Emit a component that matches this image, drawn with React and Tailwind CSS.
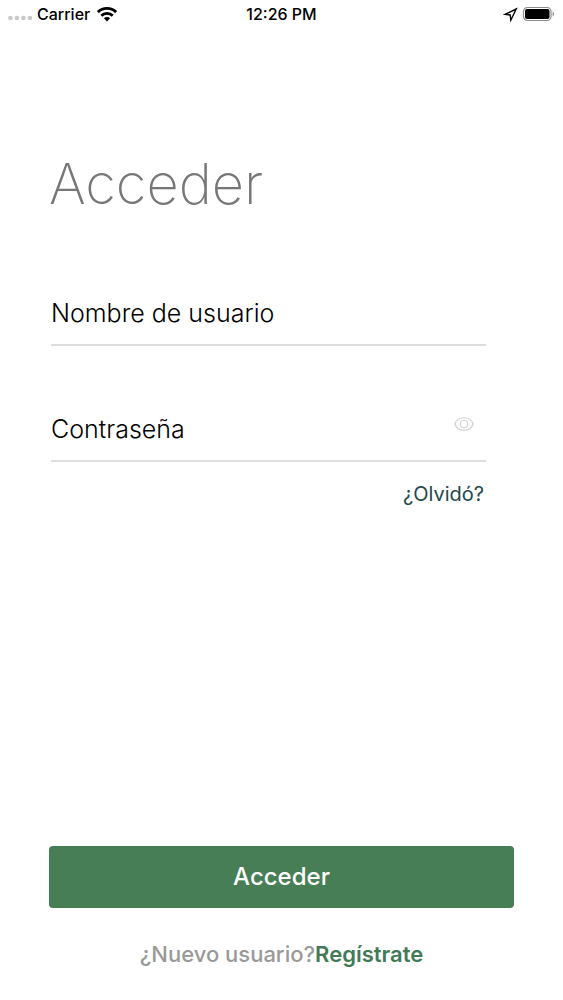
import { useState } from 'react';

const StatusBar = () => (
  <header className="grid grid-cols-3 items-center h-7 px-2 text-base text-black">
    <div className="flex items-center gap-1">
      <svg width="25" height="8" viewBox="0 0 25 8" className="mt-2" aria-hidden="true">
        <g fill="#c9c9c9">
          <circle cx="2.4" cy="4" r="2.3" />
          <circle cx="8.9" cy="4" r="2.3" />
          <circle cx="15.4" cy="4" r="2.3" />
          <circle cx="21.9" cy="4" r="2.3" />
        </g>
      </svg>
      <span className="font-medium">Carrier</span>
      <svg width="22" height="16" viewBox="0 0 22 16" className="ml-0.5" aria-hidden="true">
        <g fill="none" stroke="#000" strokeWidth="2.9">
          <path d="M1.9 6.1a13 13 0 0 1 18.2 0" />
          <path d="M5.3 9.7a8.1 8.1 0 0 1 11.4 0" />
        </g>
        <path d="M11 15.4l-3.1-3.2a4.4 4.4 0 0 1 6.2 0z" fill="#000" />
      </svg>
    </div>

    <span className="text-center whitespace-nowrap font-medium">12:26 PM</span>

    <div className="flex items-center justify-end gap-1">
      <svg width="15" height="15" viewBox="0 0 15 15" aria-hidden="true">
        <path d="M13.2 2L2 7.4l5.2.6.6 5.2z" fill="none" stroke="#000" strokeWidth="1.4" />
      </svg>
      <svg width="33" height="16" viewBox="0 0 33 16" aria-hidden="true">
        <rect x="1.5" y="1.5" width="27.5" height="13" rx="4" fill="none" stroke="#8c8c8c" strokeWidth="1.2" />
        <rect x="3" y="3" width="24.5" height="10" rx="2" fill="#000" />
        <path d="M30.6 5.5c1.9.7 1.9 4.3 0 5z" fill="#8c8c8c" />
      </svg>
    </div>
  </header>
);

const EyeIcon = () => (
  <svg width="20" height="16" viewBox="0 0 20 16" fill="none" stroke="#d0ccd0" strokeWidth="1.1" aria-hidden="true">
    <path d="M.7 8C2.4 3.8 6 1.7 10 1.7S17.6 3.8 19.3 8C17.6 12.2 14 14.3 10 14.3S2.4 12.2.7 8z" />
    <circle cx="10" cy="8" r="3.7" />
  </svg>
);

const App = () => {
  const [formData, setFormData] = useState({ username: '', password: '' });
  const [showPassword, setShowPassword] = useState(false);

  const handleInputChange = (e) => {
    setFormData({ ...formData, [e.target.name]: e.target.value });
  };

  const handleSubmit = (e) => {
    e.preventDefault();
  };

  return (
    <div className="flex flex-col min-h-screen bg-white font-['Inter',sans-serif]">
      <StatusBar />

      <form onSubmit={handleSubmit} className="flex flex-col flex-1 px-[49px] pb-8">
        <h1 className="mt-30 text-[56px] leading-[72px] font-extralight text-[#777777]">Acceder</h1>

        <div className="mt-15 ml-0.5 mr-7">
          <div className="border-b-2 border-[#dedede]">
            <input type="text" name="username" aria-label="Nombre de usuario" placeholder="Nombre de usuario"
                   value={formData.username} onChange={handleInputChange}
                   className="block w-full h-16 pt-0.5 text-[25px] font-light text-black placeholder-black focus:outline-none" />
          </div>

          <div className="mt-[50px] flex items-center border-b-2 border-[#dedede]">
            <input type={showPassword ? 'text' : 'password'} name="password" aria-label="Contraseña" placeholder="Contraseña"
                   value={formData.password} onChange={handleInputChange}
                   className="block flex-1 min-w-0 h-16 pt-0.5 text-[25px] font-light text-black placeholder-black focus:outline-none" />
            <button type="button" aria-label="Mostrar contraseña" onClick={() => setShowPassword(!showPassword)}
                    className="mr-3 mb-2">
              <EyeIcon />
            </button>
          </div>

          <div className="mt-5 mr-0.5 text-right">
            <a href="#olvido" className="text-xl leading-6 text-[#24474a]">¿Olvidó?</a>
          </div>
        </div>

        <button type="submit" className="mt-auto h-[62px] rounded bg-[#477e56] text-2xl font-medium text-white">
          Acceder
        </button>

        <p className="mt-8 text-center text-[22px] leading-7 font-medium text-[#999999]">
          ¿Nuevo usuario?<a href="#registro" className="font-semibold text-[#437a56]">Regístrate</a>
        </p>
      </form>
    </div>
  );
};

export default App;
